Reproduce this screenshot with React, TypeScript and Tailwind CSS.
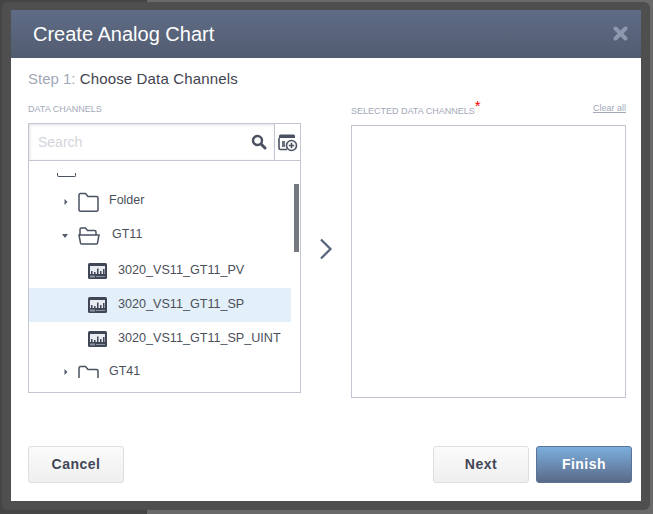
const font = "font-['Liberation_Sans',Arial,sans-serif]"

function ChannelIcon() {
  return (
    <svg width="19" height="16" viewBox="0 0 19 16" className="shrink-0">
      <rect x="0" y="0" width="19" height="16" rx="1.5" fill="#3f4656" />
      <rect x="2" y="3" width="15" height="8" fill="#e8ebf0" />
      <path d="M3 11V8h1.5v3zM6 11V9h1.5v2zM9 11V5.5h1.5V11zM12 11V8h1.5v3zM15 11V6h1.5v5z" fill="#3f4656" />
      <rect x="2" y="12.5" width="5" height="2" fill="#8b93a3" />
      <rect x="8" y="13" width="9" height="1" fill="#8b93a3" />
    </svg>
  )
}

function FolderClosed({ clip }: { clip?: boolean }) {
  return (
    <svg width="21" height={clip ? 13 : 20} viewBox={clip ? "0 0 21 13" : "0 0 21 20"} fill="none" stroke="#4a5160" strokeWidth="1.5" className="shrink-0">
      <path d="M1 18V3a1.5 1.5 0 0 1 1.5-1.5h5L10 4.5h8.5A1.5 1.5 0 0 1 20 6v12a1.5 1.5 0 0 1-1.5 1.2h-16A1.5 1.5 0 0 1 1 18z" />
    </svg>
  )
}

function FolderOpen() {
  return (
    <svg width="22" height="18" viewBox="0 0 22 18" fill="none" stroke="#4a5160" strokeWidth="1.5" className="shrink-0">
      <path d="M2 8V2.5A1.5 1.5 0 0 1 3.5 1h4l2 2.5h7A1.5 1.5 0 0 1 18 5v3" />
      <path d="M1 8h20l-1.5 8a1.5 1.5 0 0 1-1.5 1H4a1.5 1.5 0 0 1-1.5-1z" />
    </svg>
  )
}

function Caret({ open }: { open?: boolean }) {
  return open ? (
    <svg width="6" height="4" viewBox="0 0 6 4" className="shrink-0"><path d="M0 0h6L3 4z" fill="#555c6a" /></svg>
  ) : (
    <svg width="4" height="6" viewBox="0 0 4 6" className="shrink-0"><path d="M0.5 0l3 3-3 3z" fill="#555c6a" /></svg>
  )
}

function ChannelRow({ name, active }: { name: string; active?: boolean }) {
  return (
    <div className={`flex h-[34px] items-center pl-[59px] ${active ? "bg-[#e3f0f9]" : ""}`}>
      <ChannelIcon />
      <span className="ml-[11px] -translate-y-[1px] text-[12.6px] text-[#4b4f5a]">{name}</span>
    </div>
  )
}

export default function App() {
  return (
    <div className={`${font} relative h-[514px] w-[653px] overflow-hidden bg-[#6a6a6a]`}>
      <div className="absolute inset-y-0 left-0 w-[147px] bg-[#454545]" />
      {/* modal */}
      <div className="absolute left-[2px] top-[2px] h-[508px] w-[648px] rounded-[6px] bg-[#4f4f4f] p-[8px_9px_9px_9px]">
        <div className="flex h-[491px] w-[630px] flex-col bg-white">
          <div className="flex h-[48px] items-center justify-between bg-gradient-to-b from-[#5f6c86] to-[#525c70] pl-[22px] pr-[13px]">
            <h1 className="text-[20px] text-white">Create Analog Chart</h1>
            <svg width="15" height="15" viewBox="0 0 15 15" className="-translate-y-[1px]">
              <path d="M2.5 2.5l10 10M12.5 2.5l-10 10" stroke="#8d97ad" strokeWidth="4" strokeLinecap="round" />
            </svg>
          </div>

          <div className="flex-1 pl-[17px] pr-[15px]">
            <p className="mt-[12px] text-[15px] leading-[18px] tracking-[0.15px] text-[#3f4450]">
              <span className="tracking-normal text-[#a3a9b8]">Step 1: </span>Choose Data Channels
            </p>

            <div className="mt-[14px] flex items-start">
              <div className="w-[273px]">
                <div className="h-[14px] text-[9px] leading-[14px] text-[#a3a9b8]">DATA CHANNELS</div>
                <div className="mt-[7px] h-[270px] w-[273px] overflow-hidden border border-[#c2c6d2]">
                  <div className="flex h-[37px] border-b border-[#c2c6d2]">
                    <div className="flex flex-1 items-center justify-between pl-[9px] pr-[7px] shadow-[inset_1px_1px_3px_rgba(0,0,0,0.12)]">
                      <span className="text-[14px] text-[#d3d5da]">Search</span>
                      <svg width="16" height="16" viewBox="0 0 16 16" fill="none" stroke="#4a5160">
                        <circle cx="6.5" cy="6.5" r="4.5" strokeWidth="2.4" />
                        <path d="M10 10l4 4" strokeWidth="3" strokeLinecap="round" />
                      </svg>
                    </div>
                    <div className="flex w-[26px] items-center justify-center border-l border-[#c2c6d2]">
                      <svg width="20" height="19" viewBox="0 0 20 19">
                        <path d="M1 5V3a1.5 1.5 0 0 1 1.5-1.5h13A1.5 1.5 0 0 1 17 3v2z" fill="#4a5160" />
                        <path d="M1 5v10a1.5 1.5 0 0 0 1.5 1.5H9" fill="none" stroke="#4a5160" strokeWidth="1.6" />
                        <path d="M4 8h3v6H4z" fill="#6b7282" />
                        <circle cx="13.5" cy="12.5" r="5" fill="#fff" stroke="#4a5160" strokeWidth="1.6" />
                        <path d="M13.5 9.8v5.4M10.8 12.5h5.4" stroke="#4a5160" strokeWidth="1.6" />
                      </svg>
                    </div>
                  </div>

                  <div className="relative h-[231px] overflow-hidden">
                    <div className="absolute right-[1px] top-[23px] h-[68px] w-[5px] bg-[#74797f]" />
                    <div className="mr-[9px]">
                      <div className="ml-[28px] pt-[12px]">
                        <div className="h-[4px] w-[19px] rounded-b-[2px] border-x border-b-[1.5px] border-[#4a5160]" />
                      </div>
                      <div className="mt-[13px] flex h-[24px] items-center pl-[35px]">
                        <Caret />
                        <span className="ml-[10px]"><FolderClosed /></span>
                        <span className="ml-[10px] -translate-y-[2px] text-[12.5px] text-[#4b4f5a]">Folder</span>
                      </div>
                      <div className="mt-[10px] flex h-[24px] items-center pl-[33px]">
                        <Caret open />
                        <span className="ml-[10px]"><FolderOpen /></span>
                        <span className="ml-[12px] -translate-y-[2px] text-[12.5px] text-[#4b4f5a]">GT11</span>
                      </div>
                      <div className="mt-[6px]"><ChannelRow name="3020_VS11_GT11_PV" /></div>
                      <ChannelRow name="3020_VS11_GT11_SP" active />
                      <ChannelRow name="3020_VS11_GT11_SP_UINT" />
                      <div className="mt-[9px] flex h-[13px] items-start overflow-hidden pl-[35px]">
                        <span className="mt-[4px]"><Caret /></span>
                        <span className="ml-[10px]"><FolderClosed clip /></span>
                        <span className="ml-[10px] text-[12.5px] leading-[13px] text-[#4b4f5a]">GT41</span>
                      </div>
                    </div>
                  </div>
                </div>
              </div>

              <div className="flex w-[50px] justify-center self-center pb-[2px]">
                <svg width="14" height="22" viewBox="0 0 14 22" fill="none" stroke="#56627a" strokeWidth="2.2">
                  <path d="M2 1.5l9.5 9.5L2 20.5" />
                </svg>
              </div>

              <div className="w-[275px]">
                <div className="flex h-[14px] items-start justify-between">
                  <span className="relative -top-[1px] text-[9px] leading-[14px] text-[#a3a9b8]">
                    SELECTED DATA CHANNELS<span className="relative -top-[3px] text-[15px] leading-none text-[#f00]">*</span>
                  </span>
                  <span className="text-[9px] leading-[12px] text-[#a3a9b8] underline">Clear all</span>
                </div>
                <div className="mt-[9px] h-[273px] border border-[#c2c6d2]" />
              </div>
            </div>
          </div>

          <div className="flex justify-between pb-[18px] pl-[17px] pr-[9px]">
            <button className="h-[37px] w-[96px] rounded-[3px] border border-[#dedede] bg-gradient-to-b from-[#fbfbfb] to-[#efefef] text-[14px] font-bold tracking-[0.5px] text-[#414656]">Cancel</button>
            <div className="flex gap-[7px]">
              <button className="h-[37px] w-[96px] rounded-[3px] border border-[#dedede] bg-gradient-to-b from-[#fbfbfb] to-[#efefef] text-[14px] font-bold tracking-[0.5px] text-[#414656]">Next</button>
              <button className="h-[37px] w-[96px] rounded-[3px] border border-[#5b7396] bg-gradient-to-b from-[#7bafdf] to-[#5a6a88] text-[14px] font-bold tracking-[0.5px] text-white">Finish</button>
            </div>
          </div>
        </div>
      </div>
    </div>
  )
}
